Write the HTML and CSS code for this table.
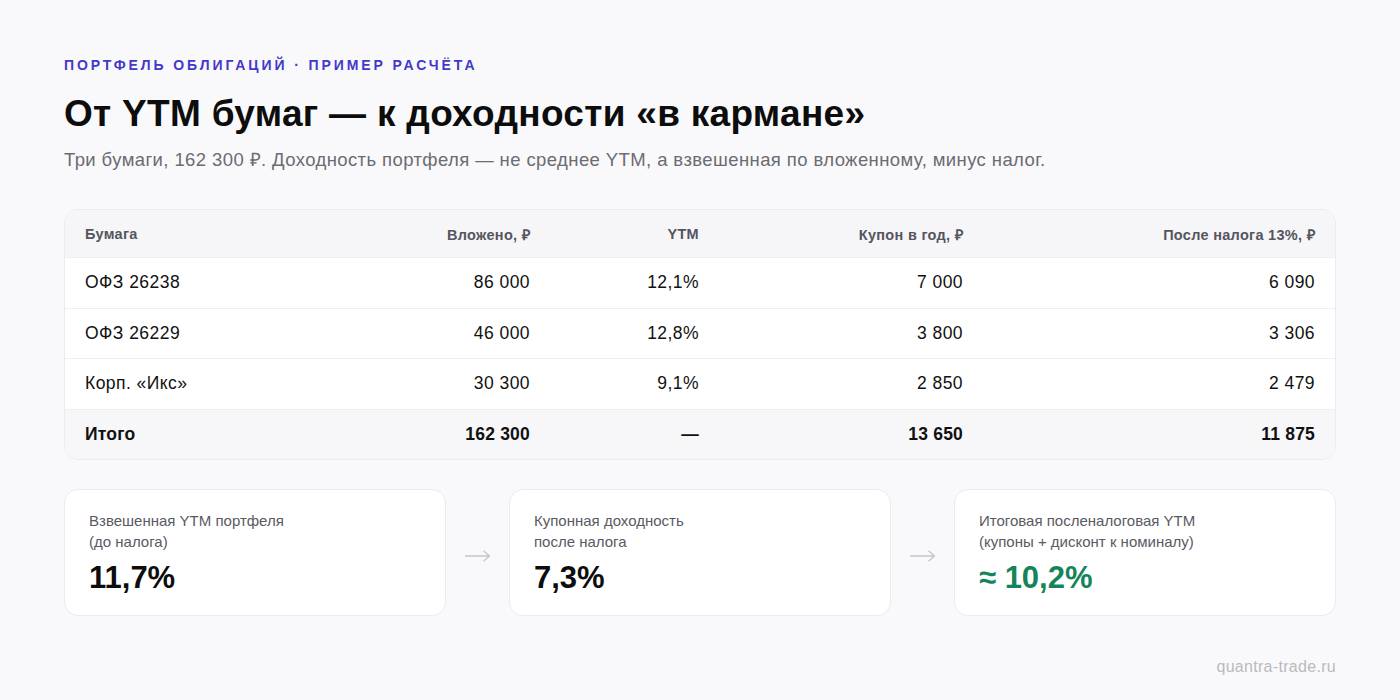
FILE: index.html
```html
<!DOCTYPE html>
<html lang="ru">
<head>
<meta charset="utf-8">
<link rel="stylesheet" href="styles.css">
</head>
<body>
<main class="page">
  <div class="eyebrow">Портфель облигаций · пример расчёта</div>
  <h1 class="title">От YTM бумаг — к доходности «в кармане»</h1>
  <p class="subtitle">Три бумаги, 162 300 ₽. Доходность портфеля — не среднее YTM, а взвешенная по вложенному, минус налог.</p>

  <div class="table">
    <div class="row head">
      <div class="c l">Бумага</div>
      <div class="c">Вложено, ₽</div>
      <div class="c">YTM</div>
      <div class="c">Купон в год, ₽</div>
      <div class="c">После налога 13%, ₽</div>
    </div>
    <div class="row">
      <div class="c l">ОФЗ 26238</div>
      <div class="c">86 000</div>
      <div class="c">12,1%</div>
      <div class="c">7 000</div>
      <div class="c">6 090</div>
    </div>
    <div class="row">
      <div class="c l">ОФЗ 26229</div>
      <div class="c">46 000</div>
      <div class="c">12,8%</div>
      <div class="c">3 800</div>
      <div class="c">3 306</div>
    </div>
    <div class="row">
      <div class="c l">Корп. «Икс»</div>
      <div class="c">30 300</div>
      <div class="c">9,1%</div>
      <div class="c">2 850</div>
      <div class="c">2 479</div>
    </div>
    <div class="row total">
      <div class="c l">Итого</div>
      <div class="c">162 300</div>
      <div class="c">—</div>
      <div class="c">13 650</div>
      <div class="c">11 875</div>
    </div>
  </div>

  <div class="cards">
    <div class="card">
      <div class="label">Взвешенная YTM портфеля<br>(до налога)</div>
      <div class="value">11,7%</div>
    </div>
    <div class="arrow"><svg width="26" height="12" viewBox="0 0 26 12"><path d="M0.5 6H24.5M19 1.2L24.5 6L19 10.8" fill="none" stroke="#c4c4ca" stroke-width="1.3" stroke-linecap="round" stroke-linejoin="round"/></svg></div>
    <div class="card">
      <div class="label">Купонная доходность<br>после налога</div>
      <div class="value">7,3%</div>
    </div>
    <div class="arrow"><svg width="26" height="12" viewBox="0 0 26 12"><path d="M0.5 6H24.5M19 1.2L24.5 6L19 10.8" fill="none" stroke="#c4c4ca" stroke-width="1.3" stroke-linecap="round" stroke-linejoin="round"/></svg></div>
    <div class="card">
      <div class="label">Итоговая посленалоговая YTM<br>(купоны + дисконт к номиналу)</div>
      <div class="value green">≈ 10,2%</div>
    </div>
  </div>

  <div class="footer">quantra-trade.ru</div>
</main>
</body>
</html>
```
FILE: styles.css
```css
* { box-sizing: border-box; }
html, body { margin: 0; padding: 0; }
body {
  background: #f9f9fb;
  font-family: "Liberation Sans", Arial, sans-serif;
  color: #111;
  width: 1400px;
  height: 700px;
  overflow: hidden;
}
.page {
  padding: 56px 64px 0 64px;
  display: flex;
  flex-direction: column;
}
.eyebrow {
  font-size: 14px;
  font-weight: 700;
  letter-spacing: 2.9px;
  text-transform: uppercase;
  color: #4338c9;
  line-height: 18px;
}
.title {
  margin: 17px 0 0 0;
  font-size: 37px;
  line-height: 46px;
  font-weight: 700;
  letter-spacing: 0.3px;
  color: #0d0d0d;
}
.subtitle {
  margin: 11px 0 0 0;
  font-size: 18.5px;
  line-height: 24px;
  letter-spacing: 0.4px;
  color: #6b6b73;
}
.table {
  margin-top: 37px;
  background: #fff;
  border: 1px solid #ebebef;
  border-radius: 14px;
  overflow: hidden;
}
.row {
  display: grid;
  grid-template-columns: 240px 245px 169px 264px 1fr;
  height: 50.5px;
  align-items: center;
  border-top: 1px solid #efeff2;
  font-size: 17.5px;
  letter-spacing: 0.45px;
}
.row:first-child { border-top: none; }
.row.head {
  height: 47px;
  background: #f6f6f9;
  font-size: 14.5px;
  letter-spacing: 0.3px;
  font-weight: 700;
  color: #55555d;
}
.row.total {
  background: #f7f7fa;
  font-weight: 700;
  letter-spacing: 0.2px;
}
.c {
  padding: 0 20px;
  text-align: right;
}
.c.l { text-align: left; }
.cards {
  margin-top: 29px;
  display: grid;
  grid-template-columns: 1fr 63px 1fr 63px 1fr;
  align-items: center;
}
.card {
  background: #fff;
  border: 1px solid #ebebef;
  border-radius: 14px;
  height: 127px;
  padding: 20px 24px 0 24px;
}
.label {
  font-size: 15px;
  line-height: 21px;
  color: #5a5a62;
}
.value {
  margin-top: 8px;
  font-size: 31px;
  line-height: 36px;
  font-weight: 700;
  color: #0d0d0d;
}
.value.green { color: #14855a; }
.arrow {
  display: flex;
  justify-content: center;
  align-items: center;
  padding-top: 6px;
}
.arrow svg { display: block; }
.footer {
  margin-top: 42px;
  text-align: right;
  font-size: 16px;
  letter-spacing: 0.3px;
  color: #b9b9be;
}
```
